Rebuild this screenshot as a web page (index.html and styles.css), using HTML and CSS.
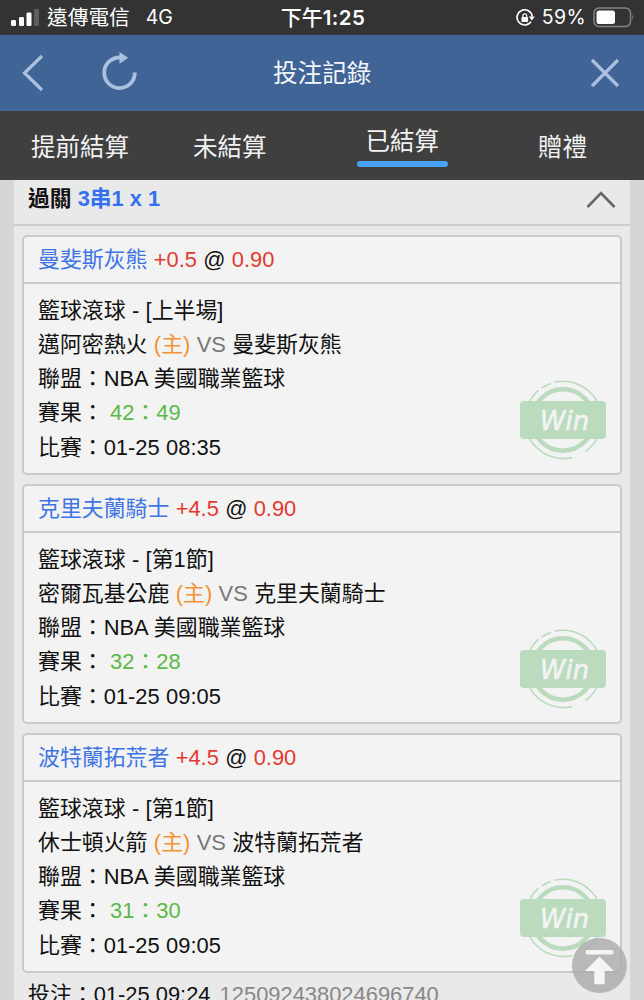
FILE: index.html
```html
<!DOCTYPE html>
<html lang="zh-Hant">
<head>
    <meta charset="UTF-8">
    <meta name="viewport" content="width=device-width, initial-scale=1.0">
    <title>投注記錄</title>
    <link rel="stylesheet" href="styles.css">
</head>
<body>
    <div class="status-bar">
        <div class="status-left">
            <svg width="29" height="19" viewBox="0 0 29 19">
                <rect x="0" y="12" width="5" height="6" rx="1.3" fill="#fff"/>
                <rect x="8" y="9" width="5" height="9" rx="1.3" fill="#fff"/>
                <rect x="15.5" y="4.5" width="5" height="13.5" rx="1.3" fill="#fff"/>
                <rect x="23" y="1" width="5" height="17" rx="1.3" fill="#5e5e5e"/>
            </svg>
            <span class="carrier">遠傳電信</span>
            <span class="network">4G</span>
        </div>
        <div class="status-time">下午<span>1:25</span></div>
        <div class="status-right">
            <svg width="20" height="18" viewBox="0 0 20 18">
                <path d="M15 12.6A7.6 7.6 0 1 1 16.2 7.5" fill="none" stroke="#fff" stroke-width="1.7"/>
                <path d="M12.8 7.500h6l-3 4z" fill="#fff"/>
                <rect x="5.5" y="8" width="6.6" height="5" rx=".8" fill="#fff"/>
                <path d="M6.9 8.5V6.7a1.9 1.9 0 0 1 3.8 0v1.8" fill="none" stroke="#fff" stroke-width="1.2"/>
            </svg>
            <span class="percent">59%</span>
            <svg width="42" height="21" viewBox="0 0 42 21">
                <rect x="1" y="1" width="36.5" height="18.5" rx="5" fill="none" stroke="#858585" stroke-width="1.5"/>
                <rect x="3.5" y="3.5" width="18.5" height="13.5" rx="2.5" fill="#fff"/>
                <path d="M39.3 7.5q2 2.8 0 5.500z" fill="#858585"/>
            </svg>
        </div>
    </div>

    <div class="header">
        <svg class="back" width="24" height="40" viewBox="0 0 24 40">
            <path d="M20 3L2.5 20L20 37" fill="none" stroke="#abc0dc" stroke-width="3.2"/>
        </svg>
        <svg class="reload" width="38" height="42" viewBox="0 0 38 42">
            <path d="M34.8 20.5A15.3 15.3 0 1 1 20 5.500" fill="none" stroke="#abc0dc" stroke-width="3.8"/>
            <path d="M19.500 0l8.700 5.700-8.700 6z" fill="#abc0dc"/>
        </svg>
        <h1>投注記錄</h1>
        <svg class="close" width="32" height="32" viewBox="0 0 32 32">
            <path d="M3 3l26 26M29 3L3 29" fill="none" stroke="#abc0dc" stroke-width="3.2"/>
        </svg>
    </div>

    <div class="tabs">
        <div class="tab">提前結算</div>
        <div class="tab">未結算</div>
        <div class="tab active">已結算</div>
        <div class="tab">贈禮</div>
    </div>

    <div class="sheet">
        <div class="sheet-title">
            <h2>過關 <span>3串1 x 1</span></h2>
            <svg width="30" height="19" viewBox="0 0 30 19">
                <path d="M1.5 17L15 3l13.5 14" fill="none" stroke="#666" stroke-width="2.6"/>
            </svg>
        </div>

        <div class="cards">
            <div class="card">
                <div class="card-title"><span class="team">曼斐斯灰熊</span> <span class="odds">+0.5</span> @ <span class="odds">0.90</span></div>
                <div class="card-body">
                    <p>籃球滾球 - [上半場]</p>
                    <p>邁阿密熱火 <span class="home">(主)</span> <span class="vs">VS</span> 曼斐斯灰熊</p>
                    <p>聯盟：NBA 美國職業籃球</p>
                    <p>賽果： <span class="score">42：49</span></p>
                    <p>比賽：01-25 08:35</p>
                    <svg class="stamp" viewBox="0 0 88 80">
                        <circle cx="44" cy="40" r="30.7"/>
                        <path d="M35.3 2.3A38.7 38.7 0 0 1 66.5 71.5M53.2 77.6A38.7 38.7 0 0 1 10 22.5A38.7 38.7 0 0 1 19.5 10.2M22.5 8.2A38.7 38.7 0 0 1 31.8 3.4"/>
                        <rect x="1" y="21" width="86" height="38" rx="4"/>
                        <text x="21" y="49.5" textLength="49" lengthAdjust="spacingAndGlyphs">Win</text>
                    </svg>
                </div>
            </div>

            <div class="card">
                <div class="card-title"><span class="team">克里夫蘭騎士</span> <span class="odds">+4.5</span> @ <span class="odds">0.90</span></div>
                <div class="card-body">
                    <p>籃球滾球 - [第1節]</p>
                    <p>密爾瓦基公鹿 <span class="home">(主)</span> <span class="vs">VS</span> 克里夫蘭騎士</p>
                    <p>聯盟：NBA 美國職業籃球</p>
                    <p>賽果： <span class="score">32：28</span></p>
                    <p>比賽：01-25 09:05</p>
                    <svg class="stamp" viewBox="0 0 88 80">
                        <circle cx="44" cy="40" r="30.7"/>
                        <path d="M35.3 2.3A38.7 38.7 0 0 1 66.5 71.5M53.2 77.6A38.7 38.7 0 0 1 10 22.5A38.7 38.7 0 0 1 19.5 10.2M22.5 8.2A38.7 38.7 0 0 1 31.8 3.4"/>
                        <rect x="1" y="21" width="86" height="38" rx="4"/>
                        <text x="21" y="49.5" textLength="49" lengthAdjust="spacingAndGlyphs">Win</text>
                    </svg>
                </div>
            </div>

            <div class="card">
                <div class="card-title"><span class="team">波特蘭拓荒者</span> <span class="odds">+4.5</span> @ <span class="odds">0.90</span></div>
                <div class="card-body">
                    <p>籃球滾球 - [第1節]</p>
                    <p>休士頓火箭 <span class="home">(主)</span> <span class="vs">VS</span> 波特蘭拓荒者</p>
                    <p>聯盟：NBA 美國職業籃球</p>
                    <p>賽果： <span class="score">31：30</span></p>
                    <p>比賽：01-25 09:05</p>
                    <svg class="stamp" viewBox="0 0 88 80">
                        <circle cx="44" cy="40" r="30.7"/>
                        <path d="M35.3 2.3A38.7 38.7 0 0 1 66.5 71.5M53.2 77.6A38.7 38.7 0 0 1 10 22.5A38.7 38.7 0 0 1 19.5 10.2M22.5 8.2A38.7 38.7 0 0 1 31.8 3.4"/>
                        <rect x="1" y="21" width="86" height="38" rx="4"/>
                        <text x="21" y="49.5" textLength="49" lengthAdjust="spacingAndGlyphs">Win</text>
                    </svg>
                </div>
            </div>
        </div>

        <p class="bet-info">投注：01-25 09:24 <span>125092438024696740</span></p>
    </div>

    <div class="to-top">
        <svg width="55" height="55" viewBox="0 0 55 55">
            <rect x="13.5" y="12" width="28" height="4.5" rx="2" fill="#f5f5f5"/>
            <path d="M27.5 18.5L42 33h-9.3V45a1.2 1.2 0 0 1-1.2 1.2h-8A1.2 1.2 0 0 1 22.3 45V33H13z" fill="#f5f5f5"/>
        </svg>
    </div>
</body>
</html>
```
FILE: styles.css
```css
* {
    box-sizing: border-box;
}
body {
    margin: 0;
    height: 1000px;
    overflow: hidden;
    background-color: #d6d6d6;
    font-family: "Liberation Sans", "Noto Sans CJK TC", sans-serif;
    font-size: 21.9px;
    color: #111;
}
h1, h2, p {
    margin: 0;
}
svg {
    display: block;
    flex: none;
}

/* Phone status bar */
.status-bar {
    display: flex;
    align-items: center;
    height: 35px;
    padding: 0 9px 0 11px;
    background-color: #333;
    color: #fff;
    font-family: Inter, "Noto Sans CJK TC", sans-serif;
    font-size: 19.5px;
    line-height: 35px;
}
.status-left,
.status-right {
    display: flex;
    align-items: center;
    flex: 1;
}
.carrier {
    margin-left: 7px;
    font-size: 20.7px;
}
.network {
    margin-left: 16px;
}
.status-time {
    font-weight: 500;
    font-size: 21px;
}
.status-time span {
    font-weight: 600;
    font-size: 20.5px;
    letter-spacing: 0.4px;
}
.status-right {
    justify-content: flex-end;
}
.percent {
    margin: 0 7px 0 6px;
    letter-spacing: 0.4px;
}

/* Title bar */
.header {
    display: flex;
    align-items: center;
    height: 76px;
    padding: 0 23px 0 22px;
    background-color: #406495;
    color: #f4f7fb;
}
.reload {
    margin-left: 54px;
}
.header h1 {
    margin: 0 0 5px 135px;
    font-size: 24.6px;
    font-weight: 400;
}
.close {
    margin-left: auto;
}

/* Tabs */
.tabs {
    display: flex;
    gap: 64px;
    height: 69px;
    padding-left: 31px;
    background-color: #3f3f3f;
    color: #f2f2f2;
    font-size: 24.5px;
    line-height: 73px;
}
.tab.active {
    align-self: flex-start;
    margin: 11px 26px 0;
    padding: 0 9px;
    line-height: 39px;
}
.tab.active::after {
    content: "";
    display: block;
    height: 6px;
    margin: 0 -9px;
    border-radius: 3px;
    background-color: #49a3f3;
}

/* Bet slip */
.sheet {
    margin: 0 14px;
    height: 820px;
    background-color: #e9e9e9;
}
.sheet-title {
    display: flex;
    justify-content: space-between;
    align-items: center;
    height: 46px;
    padding: 0 14px 6px;
    border-bottom: 2px solid #cdcdcd;
}
.sheet-title h2 {
    font-size: 21.8px;
    line-height: 34px;
    color: #111;
}
.sheet-title h2 span {
    color: #3370f0;
}
.cards {
    display: flex;
    flex-direction: column;
    gap: 9px;
    padding: 9px 8px 0;
}
.card {
    height: 240px;
    border: 2px solid #cacaca;
    border-radius: 5px;
    background-color: #f3f3f3;
}
.card-title {
    height: 47px;
    padding-left: 14px;
    border-bottom: 2px solid #cacaca;
    line-height: 46px;
    word-spacing: 0.2px;
}
.card-body {
    position: relative;
    padding: 9.5px 14px;
    line-height: 34.3px;
    word-spacing: 0.3px;
}
.team {
    color: #3f74e6;
}
.odds {
    color: #e23a32;
}
.home {
    color: #f39235;
}
.vs {
    color: #777;
}
.score {
    color: #5bb947;
}

/* Win stamp in the corner of a card */
.stamp {
    position: absolute;
    right: 13px;
    top: 96px;
    width: 88px;
    height: 80px;
}
.stamp circle {
    fill: none;
    stroke: #bbdbbe;
    stroke-width: 4.6px;
}
.stamp path {
    fill: none;
    stroke: #bbdbbe;
    stroke-width: 1.6px;
}
.stamp rect {
    fill: #bbdbbe;
}
.stamp text {
    font-family: "DejaVu Sans", sans-serif;
    font-size: 26.5px;
    font-style: italic;
    fill: #f3f3f3;
    stroke: #f3f3f3;
    stroke-width: 0.6px;
}
.bet-info {
    padding: 5px 14px 0;
    line-height: 34px;
}
.bet-info span {
    margin-left: 3px;
    color: #888;
}

/* Back to top button */
.to-top {
    position: absolute;
    left: 572px;
    top: 938px;
    width: 55px;
    height: 55px;
    border-radius: 50%;
    background-color: rgba(170, 170, 170, 0.8);
}
```
